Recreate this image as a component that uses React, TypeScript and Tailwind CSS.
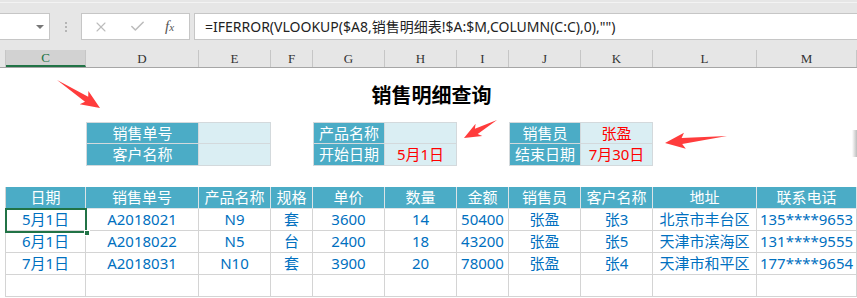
import { X, Check } from "lucide-react";

const cols = [6, 80, 113, 72, 42, 72, 72, 52, 72, 72, 104, 100];
const colLetters = ["", "C", "D", "E", "F", "G", "H", "I", "J", "K", "L", "M"];

const headers = ["日期", "销售单号", "产品名称", "规格", "单价", "数量", "金额", "销售员", "客户名称", "地址", "联系电话"];

const rows = [
  ["5月1日", "A2018021", "N9", "套", "3600", "14", "50400", "张盈", "张3", "北京市丰台区", "135****9653"],
  ["6月1日", "A2018022", "N5", "台", "2400", "18", "43200", "张盈", "张5", "天津市滨海区", "131****9555"],
  ["7月1日", "A2018031", "N10", "套", "3900", "20", "78000", "张盈", "张4", "天津市和平区", "177****9654"],
];

// 查询区：列序号 -> 标签/值
const query: Record<number, { label: string; value: string }[]> = {
  2: [
    { label: "销售单号", value: "" },
    { label: "客户名称", value: "" },
  ],
  5: [
    { label: "产品名称", value: "" },
    { label: "开始日期", value: "5月1日" },
  ],
  8: [
    { label: "销售员", value: "张盈" },
    { label: "结束日期", value: "7月30日" },
  ],
};

const gridCols = "grid grid-cols-[6px_80px_113px_72px_42px_72px_72px_52px_72px_72px_104px_100px]";

function arrowPoints(tx: number, ty: number, px: number, py: number, w1: number, w2: number, h: number) {
  const dx = px - tx;
  const dy = py - ty;
  const len = Math.hypot(dx, dy);
  const ux = dx / len;
  const uy = dy / len;
  const nx = -uy;
  const ny = ux;
  const bx = tx + ux * (len - h);
  const by = ty + uy * (len - h);
  const cx = tx + ux * (len - h - 3);
  const cy = ty + uy * (len - h - 3);
  const pts = [
    [tx, ty],
    [bx + nx * w1, by + ny * w1],
    [cx + nx * w2, cy + ny * w2],
    [px, py],
    [cx - nx * w2, cy - ny * w2],
    [bx - nx * w1, by - ny * w1],
  ];
  return pts.map((p) => p.map((v) => v.toFixed(1)).join(",")).join(" ");
}

function QueryRow({ idx }: { idx: number }) {
  return (
    <div className={`${gridCols} h-[22px]`}>
      {cols.map((_, c) => {
        if (query[c]) {
          const item = query[c][idx];
          return (
            <div
              key={c}
              className={`flex items-center justify-center bg-[#4bacc6] text-white border-l border-r border-b border-[#d3d9dc] ${idx === 0 ? "border-t" : ""}`}
            >
              {item.label}
            </div>
          );
        }
        if (query[c - 1]) {
          const item = query[c - 1][idx];
          return (
            <div
              key={c}
              className={`flex items-center justify-center bg-[#daeef3] text-[#ff0000] border-r border-b border-[#d3d9dc] ${idx === 0 ? "border-t" : ""}`}
            >
              {item.value}
            </div>
          );
        }
        return <div key={c} />;
      })}
    </div>
  );
}

export default function App() {
  return (
    <div className="relative w-[857px] h-[298px] overflow-hidden bg-white font-['Noto_Sans','Noto_Sans_CJK_SC',sans-serif] text-[15px] leading-none">
      {/* 顶部工具栏 + 编辑栏 */}
      <div className="h-[50px] bg-[#e6e6e6] flex flex-col">
        <div className="h-[13px] pt-[2px]">
          <div className="h-[1px] bg-[#f3f3f3]" />
        </div>
        <div className="h-[27px] flex">
          <div className="w-[50px] bg-white border border-l-0 border-[#c6c6c6] flex items-center justify-end pr-[5px]">
            <div className="w-0 h-0 border-l-[4px] border-r-[4px] border-t-[4px] border-l-transparent border-r-transparent border-t-[#777]" />
          </div>
          <div className="w-[31px] flex items-center justify-center">
            <div className="flex flex-col gap-[2px]">
              <div className="w-[2px] h-[2px] bg-[#b5b5b5]" />
              <div className="w-[2px] h-[2px] bg-[#b5b5b5]" />
              <div className="w-[2px] h-[2px] bg-[#b5b5b5]" />
            </div>
          </div>
          <div className="w-[109px] bg-white border border-[#c6c6c6] flex items-center">
            <X size={16} strokeWidth={1.6} className="text-[#bcbcbc] ml-[11px]" />
            <Check size={17} strokeWidth={2.2} className="text-[#bcbcbc] ml-[20px]" />
            <span className="ml-[19px] font-['Liberation_Serif',serif] italic text-[15px] text-[#555]">
              f<span className="text-[11px]">x</span>
            </span>
          </div>
          <div className="ml-[4px] flex-1 bg-white border border-r-0 border-[#c6c6c6] flex items-center pl-[10px] text-[14px] text-[#222] whitespace-nowrap">
            =IFERROR(VLOOKUP($A8,销售明细表!$A:$M,COLUMN(C:C),0),"")
          </div>
        </div>
      </div>

      {/* 列标 */}
      <div className={`${gridCols} h-[18px] bg-[#e6e6e6] border-b border-[#a6a6a6] font-['Liberation_Serif',serif] text-[13px] text-[#333]`}>
        {colLetters.map((l, i) => (
          <div
            key={i}
            className={
              i === 1
                ? "flex items-center justify-center bg-[#d2d2d2] text-[#217346] border-b-2 border-[#217346] border-r border-r-[#c6c6c6]"
                : "flex items-center justify-center border-r border-[#c6c6c6]"
            }
          >
            {l}
          </div>
        ))}
      </div>

      {/* 标题 */}
      <div className="h-[54px] pl-[6px] flex items-center justify-center">
        <div className="font-['Noto_Sans_CJK_SC',sans-serif] font-bold text-[20px] text-black">销售明细查询</div>
      </div>

      {/* 查询条件 */}
      <QueryRow idx={0} />
      <QueryRow idx={1} />
      <div className="h-[21px]" />

      {/* 明细表 */}
      <div className={`${gridCols} h-[22px]`}>
        <div className="border-r border-[#d4d4d4]" />
        {headers.map((h) => (
          <div key={h} className="flex items-center justify-center bg-[#4bacc6] text-white border-r border-b border-[#dde3e6] whitespace-nowrap">
            {h}
          </div>
        ))}
      </div>
      {[...rows, Array(11).fill("")].map((r, ri) => (
        <div key={ri} className={`${gridCols} h-[22px]`}>
          <div className="border-r border-[#d4d4d4]" />
          {r.map((v, ci) => (
            <div key={ci} className="flex items-center justify-center text-[#0070c0] border-r border-b border-[#d4d4d4] whitespace-nowrap">
              {v}
            </div>
          ))}
        </div>
      ))}

      {/* 选中单元格 */}
      <div className="absolute left-[5px] top-[208px] w-[82px] h-[25px] border-2 border-[#217346]" />
      <div className="absolute left-[84px] top-[230px] w-[6px] h-[6px] bg-[#217346] border border-white" />

      {/* 右侧阴影 */}
      <div className="absolute left-[852px] top-[130px] w-[5px] h-[27px] bg-gradient-to-r from-white to-[#bdbdbd]" />

      {/* 红色箭头 */}
      <svg className="absolute inset-0 pointer-events-none" width={857} height={298}>
        <polygon points={arrowPoints(57, 80, 100, 108, 3, 8, 16)} fill="#ff3c3c" />
        <polygon points={arrowPoints(497, 120, 464, 138, 3, 7, 14)} fill="#ff3c3c" />
        <polygon points={arrowPoints(727, 136, 665, 143, 3, 8, 17)} fill="#ff3c3c" />
      </svg>
    </div>
  );
}
